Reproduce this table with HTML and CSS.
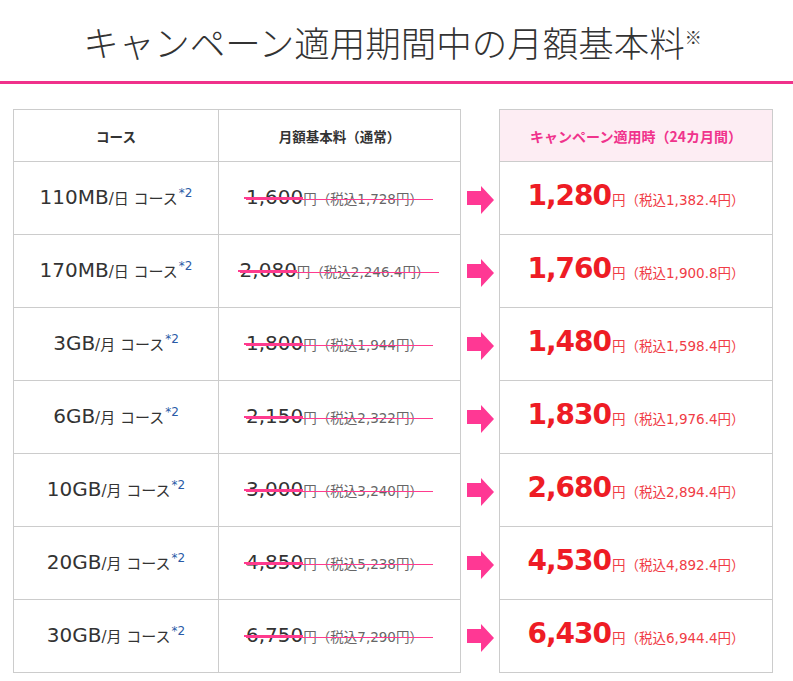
FILE: index.html
```html
<!DOCTYPE html>
<html lang="ja">
<head>
<meta charset="utf-8">
<title>キャンペーン適用期間中の月額基本料</title>
<link rel="stylesheet" href="styles.css">
</head>
<body>
<h1 class="title">キャンペーン適用期間中の月額基本料<span class="mark">※</span></h1>
<div class="plans">
  <div class="cell head c1">コース</div>
  <div class="cell head c2">月額基本料（通常）</div>
  <div class="cell gap"></div>
  <div class="cell head c4 pink">キャンペーン適用時（24カ月間）</div>

  <div class="cell c1"><span class="course"><span class="size">110MB</span><span class="unit">/日 コース</span><sup class="note">*2</sup></span></div>
  <div class="cell c2"><span class="old"><span class="onum">1,600</span><span class="osub">円（税込1,728円）</span></span></div>
  <div class="cell gap"><svg class="arrow" viewBox="0 0 27 28" width="27" height="28"><polygon points="0,5 14,5 14,0 27,14 14,28 14,19 0,19"/></svg></div>
  <div class="cell c4"><span class="new"><span class="nnum">1,280</span><span class="nsub">円（税込1,382.4円）</span></span></div>

  <div class="cell c1"><span class="course"><span class="size">170MB</span><span class="unit">/日 コース</span><sup class="note">*2</sup></span></div>
  <div class="cell c2"><span class="old"><span class="onum">2,080</span><span class="osub">円（税込2,246.4円）</span></span></div>
  <div class="cell gap"><svg class="arrow" viewBox="0 0 27 28" width="27" height="28"><polygon points="0,5 14,5 14,0 27,14 14,28 14,19 0,19"/></svg></div>
  <div class="cell c4"><span class="new"><span class="nnum">1,760</span><span class="nsub">円（税込1,900.8円）</span></span></div>

  <div class="cell c1"><span class="course"><span class="size">3GB</span><span class="unit">/月 コース</span><sup class="note">*2</sup></span></div>
  <div class="cell c2"><span class="old"><span class="onum">1,800</span><span class="osub">円（税込1,944円）</span></span></div>
  <div class="cell gap"><svg class="arrow" viewBox="0 0 27 28" width="27" height="28"><polygon points="0,5 14,5 14,0 27,14 14,28 14,19 0,19"/></svg></div>
  <div class="cell c4"><span class="new"><span class="nnum">1,480</span><span class="nsub">円（税込1,598.4円）</span></span></div>

  <div class="cell c1"><span class="course"><span class="size">6GB</span><span class="unit">/月 コース</span><sup class="note">*2</sup></span></div>
  <div class="cell c2"><span class="old"><span class="onum">2,150</span><span class="osub">円（税込2,322円）</span></span></div>
  <div class="cell gap"><svg class="arrow" viewBox="0 0 27 28" width="27" height="28"><polygon points="0,5 14,5 14,0 27,14 14,28 14,19 0,19"/></svg></div>
  <div class="cell c4"><span class="new"><span class="nnum">1,830</span><span class="nsub">円（税込1,976.4円）</span></span></div>

  <div class="cell c1"><span class="course"><span class="size">10GB</span><span class="unit">/月 コース</span><sup class="note">*2</sup></span></div>
  <div class="cell c2"><span class="old"><span class="onum">3,000</span><span class="osub">円（税込3,240円）</span></span></div>
  <div class="cell gap"><svg class="arrow" viewBox="0 0 27 28" width="27" height="28"><polygon points="0,5 14,5 14,0 27,14 14,28 14,19 0,19"/></svg></div>
  <div class="cell c4"><span class="new"><span class="nnum">2,680</span><span class="nsub">円（税込2,894.4円）</span></span></div>

  <div class="cell c1"><span class="course"><span class="size">20GB</span><span class="unit">/月 コース</span><sup class="note">*2</sup></span></div>
  <div class="cell c2"><span class="old"><span class="onum">4,850</span><span class="osub">円（税込5,238円）</span></span></div>
  <div class="cell gap"><svg class="arrow" viewBox="0 0 27 28" width="27" height="28"><polygon points="0,5 14,5 14,0 27,14 14,28 14,19 0,19"/></svg></div>
  <div class="cell c4"><span class="new"><span class="nnum">4,530</span><span class="nsub">円（税込4,892.4円）</span></span></div>

  <div class="cell c1"><span class="course"><span class="size">30GB</span><span class="unit">/月 コース</span><sup class="note">*2</sup></span></div>
  <div class="cell c2"><span class="old"><span class="onum">6,750</span><span class="osub">円（税込7,290円）</span></span></div>
  <div class="cell gap"><svg class="arrow" viewBox="0 0 27 28" width="27" height="28"><polygon points="0,5 14,5 14,0 27,14 14,28 14,19 0,19"/></svg></div>
  <div class="cell c4"><span class="new"><span class="nnum">6,430</span><span class="nsub">円（税込6,944.4円）</span></span></div>
</div>
</body>
</html>
```

FILE: styles.css
```css
html, body {
  margin: 0;
  padding: 0;
  background: #fff;
}

body {
  font-family: "DejaVu Sans", "Noto Sans CJK JP", sans-serif;
  color: #333;
}

.title {
  margin: 0;
  padding: 16px 0 13px;
  font-family: "Noto Sans CJK JP", sans-serif;
  font-size: 35.5px;
  font-weight: 300;
  line-height: 52px;
  text-align: center;
  color: #333;
  border-bottom: 3px solid #f0318b;
}

.mark {
  font-size: 17px;
  line-height: 1;
  vertical-align: 13px;
  margin-right: 8px;
}

.plans {
  margin: 25px 0 0 13px;
  display: grid;
  grid-template-columns: 206px 242px 38px 274px;
  grid-template-rows: 53px repeat(7, 73px);
}

.cell {
  box-sizing: border-box;
  display: flex;
  align-items: center;
  justify-content: center;
  border-bottom: 1px solid #ccc;
}

.cell.gap {
  border-bottom: none;
}

.c1 {
  border-left: 1px solid #ccc;
  border-right: 1px solid #ccc;
}

.c2 {
  border-right: 1px solid #ccc;
}

.c4 {
  border-left: 1px solid #ccc;
  border-right: 1px solid #ccc;
}

.head {
  border-top: 1px solid #ccc;
  font-family: "Noto Sans CJK JP", sans-serif;
  font-size: 13.5px;
  font-weight: 700;
  color: #333;
}

.head.pink {
  background: #fdedf3;
  color: #f0338c;
  font-size: 14px;
}

.course {
  line-height: 24px;
  white-space: nowrap;
}

.size {
  font-size: 20px;
}

.unit {
  font-size: 15px;
  line-height: 1;
}

.note {
  font-size: 12px;
  line-height: 1;
  color: #2a5aa6;
  vertical-align: 7px;
  margin-left: 1px;
}

.old {
  position: relative;
  line-height: 24px;
  padding-right: 10px;
  white-space: nowrap;
}

.old::after {
  content: "";
  position: absolute;
  left: 0;
  right: 0;
  top: 14px;
  height: 1px;
  background: #ff3b8e;
}

.onum {
  position: relative;
  font-size: 20px;
}

.onum::after {
  content: "";
  position: absolute;
  left: -2px;
  right: 0;
  top: 12px;
  height: 2px;
  background: #ff3b8e;
}

.osub {
  font-size: 13.5px;
  line-height: 1;
  color: #666;
}

.arrow {
  display: block;
  margin-top: 3px;
  fill: #ff3894;
}

.new {
  line-height: 34px;
  white-space: nowrap;
}

.nnum {
  font-size: 28px;
  font-weight: 700;
  letter-spacing: -1px;
  color: #ee1c25;
}

.nsub {
  font-size: 13.5px;
  line-height: 1;
  color: #f03c46;
  margin-left: 1px;
}
```
